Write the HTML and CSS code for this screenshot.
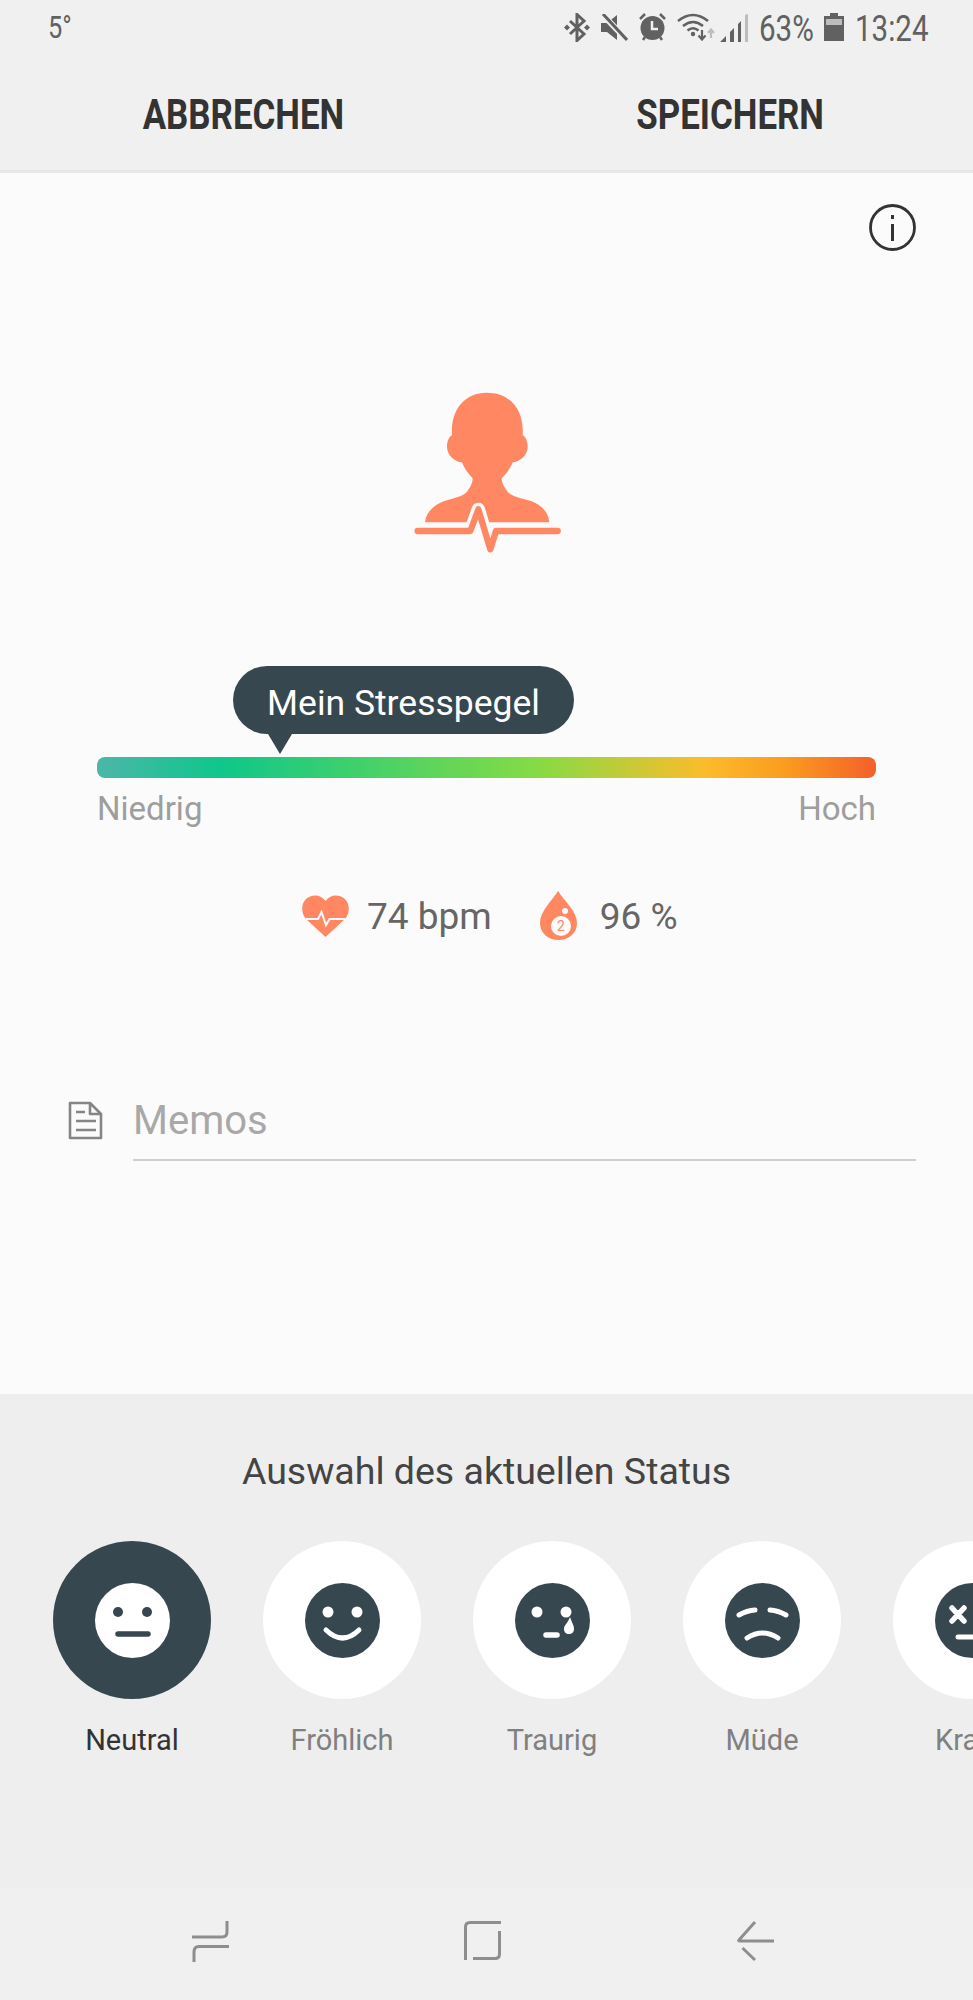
FILE: index.html
```html
<!DOCTYPE html>
<html lang="de">
<head>
    <meta charset="UTF-8">
    <meta name="viewport" content="width=device-width, initial-scale=1.0">
    <title>Stresspegel</title>
    <link rel="stylesheet" href="styles.css">
</head>
<body>
    <!-- Status bar -->
    <div class="statusbar">
        <div class="temp"><span class="narrow">5°</span></div>
        <div class="status-icons">
            <svg class="ic-bt" viewBox="0 0 26 29"><path d="M6 8 L20 21 L13 27.5 V1.5 L20 8 L6 21" fill="none" stroke="#616161" stroke-width="3"/><path d="M0 14.5 L3 11.5 L6 14.5 L3 17.5Z M20 14.5 L23 11.5 L26 14.5 L23 17.5Z" fill="#616161"/></svg>
            <svg class="ic-mute" viewBox="0 0 27 27"><path d="M0 9 H6 L16 1 V26 L6 18 H0Z" fill="#616161"/><path d="M1 0 L26 26" stroke="#f0f0f0" stroke-width="6"/><path d="M2 0 L26 26" stroke="#616161" stroke-width="3"/></svg>
            <svg class="ic-alarm" viewBox="0 0 27 28"><circle cx="13.5" cy="15" r="12" fill="#616161"/><path d="M13 8 V16 H19" fill="none" stroke="#f0f0f0" stroke-width="2.5"/><path d="M1 6 L6 1 M26 6 L21 1 M4 27 L6 24 M23 27 L21 24" stroke="#616161" stroke-width="2.5"/></svg>
            <svg class="ic-wifi" viewBox="0 0 38 28"><path d="M1 8 Q16 -4 31 8 M6 13 Q16 5 26 13 M10.5 17.5 Q16 13 21.5 17.5" fill="none" stroke="#616161" stroke-width="2.6"/><circle cx="16" cy="21" r="2.2" fill="#616161"/><path d="M25 17 V26 M21.5 22.5 L25 26.5 L28.5 22.5" fill="none" stroke="#616161" stroke-width="2.2"/><path d="M34 25 V17 M31 20 L34 16.5 L37 20" fill="none" stroke="#bdbdbd" stroke-width="2.2"/></svg>
            <svg class="ic-signal" viewBox="0 0 28 28"><path d="M0 28 L6 22 V28Z M10 28 V18 L14 14 V28Z M18 28 V10 L21 7 V28Z" fill="#616161"/><path d="M25 28 V1 L28 0 V28Z" fill="#bdbdbd"/></svg>
            <div class="pct"><span class="narrow">63%</span></div>
            <svg class="ic-batt" viewBox="0 0 20 28"><path d="M6 0 H14 V3 H20 V28 H0 V3 H6Z" fill="#616161"/><rect x="2" y="6" width="16" height="6" fill="#bdbdbd"/></svg>
            <div class="time"><span class="narrow">13:24</span></div>
        </div>
    </div>

    <div class="appbar">
        <div class="action"><span>ABBRECHEN</span></div>
        <div class="action"><span>SPEICHERN</span></div>
    </div>

    <div class="main">
        <div class="info-row">
            <svg class="ic-info" viewBox="0 0 47 47"><circle cx="23.5" cy="23.5" r="22" fill="none" stroke="#333" stroke-width="2.8"/><rect x="22" y="20" width="3" height="17" fill="#333"/><rect x="22" y="11" width="3" height="4" fill="#333"/></svg>
        </div>

        <div class="person">
            <svg viewBox="-12 0 660 570">
                <path d="M132 457 C135 425 160 405 190 393 C215 385 245 380 258 365 C268 352 275 340 275 325 C262 312 250 295 243 277 C220 275 198 255 198 230 C198 212 205 200 213 196 C208 120 250 68 318 68 C388 68 430 120 425 196 C433 200 440 212 440 230 C440 255 418 275 395 277 C388 295 375 312 362 325 C362 340 370 352 380 365 C392 380 420 385 450 393 C480 405 503 425 505 457Z" fill="#ff8762"/>
                <path d="M248 483 H268 L292 418 L328 538 L345 483 H370" fill="none" stroke="#fbfbfb" stroke-width="40" stroke-linejoin="round"/>
                <path d="M110 483 H268 L292 418 L328 538 L345 483 H530" fill="none" stroke="#ff8762" stroke-width="19" stroke-linecap="round" stroke-linejoin="round"/>
            </svg>
        </div>

        <div class="bubble">Mein Stresspegel</div>
        <div class="scale"></div>
        <div class="scale-labels">
            <span>Niedrig</span>
            <span>Hoch</span>
        </div>

        <div class="stats">
            <svg class="ic-heart" viewBox="0 0 47 42"><path d="M23.5 42 L4 24 C-2 17 -1 5 8 1.5 C14 -1 20 1 23.5 6 C27 1 33 -1 39 1.5 C48 5 49 17 43 24Z" fill="#ff8762"/><path d="M4 24 H16 L19.5 17 L24 30 L27.5 24 H43" fill="none" stroke="#fbfbfb" stroke-width="2"/></svg>
            <div class="stat-bpm">74 bpm</div>
            <svg class="ic-drop" viewBox="0 0 37 49"><path d="M18 0 C24 10 37 20 37 32 C37 42 29 49 18.5 49 C8 49 0 42 0 32 C0 20 12 10 18 0Z" fill="#ff8762"/><circle cx="25" cy="20" r="3" fill="#fbfbfb"/><circle cx="21" cy="35" r="10" fill="#fbfbfb"/><text x="21" y="40" class="drop-num">2</text></svg>
            <div class="stat-spo">96 %</div>
        </div>

        <div class="memo">
            <svg class="ic-memo" viewBox="0 0 35 39"><path d="M2 2 H22 L33 13 V37 H2Z M22 2 V13 H33" fill="none" stroke="#858585" stroke-width="2.6" stroke-linejoin="round"/><path d="M8 11 H17 M8 20 H28 M8 29 H28" stroke="#858585" stroke-width="2.4"/></svg>
            <div class="memo-field">Memos</div>
        </div>
    </div>

    <div class="panel">
        <h2>Auswahl des aktuellen Status</h2>
        <div class="moods">
            <div class="mood active">
                <div class="mood-circle">
                    <svg viewBox="0 0 75 75"><circle cx="37.5" cy="37.5" r="37.5" fill="#fff"/><circle cx="23" cy="29" r="5" fill="#37474f"/><circle cx="52" cy="29" r="5" fill="#37474f"/><path d="M23 51 H53" stroke="#37474f" stroke-width="5.5" stroke-linecap="round"/></svg>
                </div>
                <div class="mood-label">Neutral</div>
            </div>
            <div class="mood">
                <div class="mood-circle">
                    <svg viewBox="0 0 75 75"><circle cx="37.5" cy="37.5" r="37.5" fill="#37474f"/><circle cx="23" cy="29" r="5.5" fill="#fff"/><circle cx="52" cy="29" r="5.5" fill="#fff"/><path d="M21 47 Q37.5 63 54 47" fill="none" stroke="#fff" stroke-width="5" stroke-linecap="round"/></svg>
                </div>
                <div class="mood-label">Fröhlich</div>
            </div>
            <div class="mood">
                <div class="mood-circle">
                    <svg viewBox="0 0 75 75"><circle cx="37.5" cy="37.5" r="37.5" fill="#37474f"/><circle cx="22" cy="29" r="5.5" fill="#fff"/><circle cx="51" cy="29" r="5.5" fill="#fff"/><path d="M55 34 C57 40 59 42 59 46 C59 49 57 51 54 51 C51 51 49 49 49 46 C49 42 53 40 55 34Z" fill="#fff"/><path d="M31 52 H42" stroke="#fff" stroke-width="5.5" stroke-linecap="round"/></svg>
                </div>
                <div class="mood-label">Traurig</div>
            </div>
            <div class="mood">
                <div class="mood-circle">
                    <svg viewBox="0 0 75 75"><circle cx="37.5" cy="37.5" r="37.5" fill="#37474f"/><path d="M14 32 Q22 27.500 30 27 M45 27 Q53 27.500 61 32 M22 55 Q37.500 45 53 55" fill="none" stroke="#fff" stroke-width="5" stroke-linecap="round"/></svg>
                </div>
                <div class="mood-label">Müde</div>
            </div>
            <div class="mood">
                <div class="mood-circle">
                    <svg viewBox="0 0 75 75"><circle cx="37.5" cy="37.5" r="37.5" fill="#37474f"/><path d="M17 25 L29 38 M29 25 L17 38 M46 25 L58 38 M58 25 L46 38" stroke="#fff" stroke-width="5.5" stroke-linecap="round"/><path d="M23 54 H52" stroke="#fff" stroke-width="5" stroke-linecap="round"/></svg>
                </div>
                <div class="mood-label">Krank</div>
            </div>
        </div>
    </div>

    <!-- Navigation bar -->
    <div class="navbar">
        <div class="nav-item"><svg viewBox="0 0 37 41"><path d="M35 0 V11 Q35 16 30 16 H0 M37 25.500 H7 Q2 25.500 2 31 V41" fill="none" stroke="#8e8e8e" stroke-width="3"/></svg></div>
        <div class="nav-item"><svg viewBox="0 0 37 41"><path d="M37 1.500 H6 Q1.500 1.500 1.500 6 V39 M35.500 10 V33 Q35.500 37.500 31 37.500 H9" fill="none" stroke="#8e8e8e" stroke-width="3"/></svg></div>
        <div class="nav-item"><svg viewBox="0 0 37 41"><path d="M18 1 L2 19 Q1 20 3 20 H37 M5.500 27 L18 39" fill="none" stroke="#8e8e8e" stroke-width="3"/></svg></div>
    </div>
</body>
</html>
```

FILE: styles.css
```css
body {
    font-family: Roboto, Arial, sans-serif;
    background: #fbfbfb;
    color: #333;
    margin: 0;
    padding: 0;
    width: 973px;
    height: 2000px;
    overflow: hidden;
}
svg {
    display: block;
}
.statusbar {
    display: flex;
    justify-content: space-between;
    height: 56px;
    padding: 13px 45px 0 48px;
    box-sizing: border-box;
    background: #f0f0f0;
    color: #616161;
}
.narrow {
    display: block;
    transform: scaleX(0.82);
    transform-origin: left top;
    white-space: nowrap;
}
.temp {
    font-size: 31px;
    line-height: 30px;
}
.status-icons {
    display: flex;
    align-items: flex-start;
    gap: 11px;
    font-size: 36px;
    line-height: 33px;
}
.ic-bt { width: 26px; height: 29px; }
.ic-mute { width: 27px; height: 27px; margin-top: 1px; }
.ic-alarm { width: 27px; height: 28px; }
.ic-wifi { width: 38px; height: 28px; margin-right: -6px; }
.ic-signal { width: 28px; height: 28px; margin-top: 1px; }
.ic-batt { width: 20px; height: 28px; }
.pct { width: 54px; }
.time { width: 73px; }
.appbar {
    display: grid;
    grid-template-columns: 1fr 1fr;
    height: 114px;
    background: #f0f0f0;
    border-bottom: 3px solid #e8e8e8;
}
.action {
    text-align: center;
    font-size: 42px;
    line-height: 118px;
    font-weight: bold;
    color: #333;
}
.action span {
    display: inline-block;
    transform: scaleX(0.83);
}
.main {
    height: 1221px;
    background: #fbfbfb;
    overflow: hidden;
}
.info-row {
    display: flex;
    justify-content: flex-end;
    padding: 31px 57px 0 0;
}
.ic-info {
    width: 47px;
    height: 47px;
}
.person {
    display: flex;
    justify-content: center;
    margin-top: 119px;
}
.person svg {
    width: 220px;
    height: 190px;
}
.bubble {
    position: relative;
    width: 341px;
    height: 68px;
    margin: 106px 0 0 233px;
    background: #37474f;
    border-radius: 34px;
    color: #fff;
    font-size: 35.5px;
    line-height: 74px;
    text-align: center;
}
.bubble::after {
    content: "";
    position: absolute;
    left: 35px;
    top: 68px;
    border-left: 12px solid transparent;
    border-right: 12px solid transparent;
    border-top: 20px solid #37474f;
}
.scale {
    height: 21px;
    margin: 23px 97px 0 97px;
    border-radius: 8px;
    background: linear-gradient(to right, #4cb6a9 0%, #0ec78a 16%, #84db45 56%, #fbbc2b 78%, #fb9d1f 88%, #f4602a 100%);
}
.scale-labels {
    display: flex;
    justify-content: space-between;
    margin: 11px 97px 0 97px;
    font-size: 33px;
    line-height: 40px;
    color: #9e9e9e;
}
.stats {
    display: flex;
    align-items: center;
    margin: 61px 0 0 302px;
    font-size: 37px;
    line-height: 49px;
    color: #666;
}
.ic-heart { width: 47px; height: 42px; }
.ic-drop { width: 37px; height: 49px; }
.stat-bpm { margin: 2px 48px 0 18px; }
.stat-spo { margin: 2px 0 0 23px; }
.drop-num {
    font-size: 14px;
    fill: #ff8762;
    text-anchor: middle;
}
.memo {
    display: flex;
    margin: 155px 57px 0 68px;
}
.ic-memo {
    width: 35px;
    height: 39px;
    margin: 5px 30px 0 0;
}
.memo-field {
    flex: 1;
    padding: 0 0 13px 0;
    border-bottom: 2px solid #cfcfcf;
    font-size: 40px;
    line-height: 50px;
    color: #a8a8a8;
}
.panel {
    height: 494px;
    padding-top: 55px;
    box-sizing: border-box;
    background: #eeeeee;
    overflow: hidden;
}
.panel h2 {
    margin: 0;
    text-align: center;
    font-size: 37.5px;
    line-height: 44px;
    font-weight: normal;
    color: #444;
}
.moods {
    display: flex;
    gap: 52px;
    margin-top: 48px;
    padding-left: 53px;
}
.mood {
    flex: 0 0 158px;
}
.mood-circle {
    display: flex;
    align-items: center;
    justify-content: center;
    width: 158px;
    height: 158px;
    border-radius: 50%;
    background: #fff;
}
.mood-circle svg {
    width: 75px;
    height: 75px;
}
.mood.active .mood-circle {
    background: #37474f;
}
.mood-label {
    margin-top: 23px;
    text-align: center;
    font-size: 29px;
    line-height: 36px;
    color: #808080;
}
.mood.active .mood-label {
    color: #333;
}
.navbar {
    display: grid;
    grid-template-columns: repeat(3, 272.5px);
    height: 112px;
    padding: 33px 0 0 74px;
    box-sizing: border-box;
    background: #f0f0f0;
}
.nav-item {
    display: flex;
    justify-content: center;
}
.nav-item svg {
    width: 37px;
    height: 41px;
}
```
